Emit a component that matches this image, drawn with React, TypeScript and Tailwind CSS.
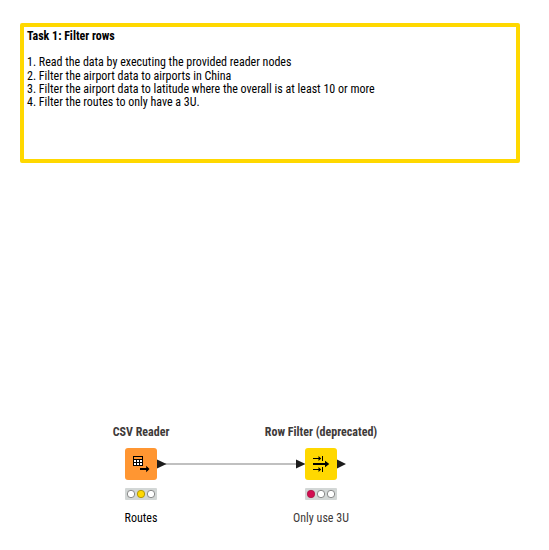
import React from 'react';

const condensed =
  "font-['Roboto_Condensed','Roboto',sans-serif] [font-stretch:75%]";

function Lights({ colors }: { colors: string[] }) {
  return (
    <svg className="block h-3 w-8" viewBox="0 0 32 12">
      <rect width="32" height="12" rx="1" fill="#d3d7d6" />
      {colors.map((c, i) => (
        <circle
          key={i}
          cx={6 + i * 10}
          cy="6"
          r="3.7"
          fill={c}
          stroke={c === '#ffffff' ? '#6e6e6e' : c === '#ffd800' ? '#a08800' : '#a81442'}
          strokeWidth="0.8"
        />
      ))}
    </svg>
  );
}

function TableArrow() {
  return (
    <svg className="block h-8 w-8" viewBox="0 0 32 32">
      <g shapeRendering="crispEdges">
        <path d="M8 8H18V18H8Z" fill="#000" />
        <path
          d="M9 12H11V14H9ZM12 12H14V14H12ZM15 12H17V14H15ZM9 15H11V17H9ZM12 15H14V17H12ZM15 15H17V17H15Z"
          fill="#fff"
        />
        <path d="M9 9H17V11H9Z" fill="#ff9632" />
      </g>
      <path d="M15 20H21.200V17.800L24.500 21L21.200 24.200V22H15Z" fill="#000" />
    </svg>
  );
}

function FilterArrows() {
  return (
    <svg className="block h-8 w-8" viewBox="0 0 32 32">
      <path d="M8 15H20V12.800L24.300 16L20 19.200V17H8Z" fill="#000" />
      <path
        d="M8 10H13.500V8L16.200 10.500L13.500 13V11H8ZM17 8H18V13H17ZM8 21H13.500V19L16.200 21.500L13.500 24V22H8ZM17 19H18V24H17Z"
        fill="#000"
      />
    </svg>
  );
}

interface NodeProps {
  title: string;
  caption: string;
  captionClass: string;
  place: string;
  tile: string;
  lights: string[];
  children: React.ReactNode;
}

function WorkflowNode({ title, caption, captionClass, place, tile, lights, children }: NodeProps) {
  return (
    <div className={`absolute top-[425px] flex w-[160px] flex-col items-center ${place}`}>
      <div className="h-[23px] text-[12px] leading-[14px] font-bold whitespace-nowrap text-[#3e3a39]">
        {title}
      </div>
      <div className={`h-8 w-8 rounded-[3px] ${tile}`}>{children}</div>
      <div className="mt-2 h-3">
        <Lights colors={lights} />
      </div>
      <div className={`mt-[11px] text-[12px] leading-[14px] whitespace-nowrap ${captionClass}`}>
        {caption}
      </div>
    </div>
  );
}

export default function App() {
  return (
    <main className={`relative h-[550px] w-[549px] overflow-hidden bg-white ${condensed}`}>
      <section className="mt-[23px] ml-5 h-[140px] w-[500px] rounded-[2px] border-4 border-[#ffd800] pt-[2.8px] pl-[3px] text-[12px] leading-[13.3px] tracking-[-0.01px] text-black">
        <p className="font-bold">Task 1: Filter rows</p>
        <p>&nbsp;</p>
        <p>1. Read the data by executing the provided reader nodes</p>
        <p>2. Filter the airport data to airports in China</p>
        <p>3. Filter the airport data to latitude where the overall is at least 10 or more</p>
        <p>4. Filter the routes to only have a 3U.</p>
      </section>

      <svg className="absolute top-[456px] left-[157px] h-4 w-[190px]" viewBox="0 0 190 16">
        <path d="M8 8H140" stroke="#c0c0c0" strokeWidth="2" />
        <path d="M0 3.5L9.5 8L0 12.5ZM139 3.5L148.500 8L139 12.500ZM180 3.500L189 8L180 12.500Z" fill="#1c1c1c" />
      </svg>
      <WorkflowNode
        title="CSV Reader"
        caption="Routes"
        captionClass="text-black"
        place="left-[61px]"
        tile="bg-[#ff9632]"
        lights={['#ffffff', '#ffd800', '#ffffff']}
      >
        <TableArrow />
      </WorkflowNode>
      <WorkflowNode
        title="Row Filter (deprecated)"
        caption="Only use 3U"
        captionClass="text-[#3e3a39]"
        place="left-[241px]"
        tile="bg-[#ffd800]"
        lights={['#d30d52', '#ffffff', '#ffffff']}
      >
        <FilterArrows />
      </WorkflowNode>
    </main>
  );
}
